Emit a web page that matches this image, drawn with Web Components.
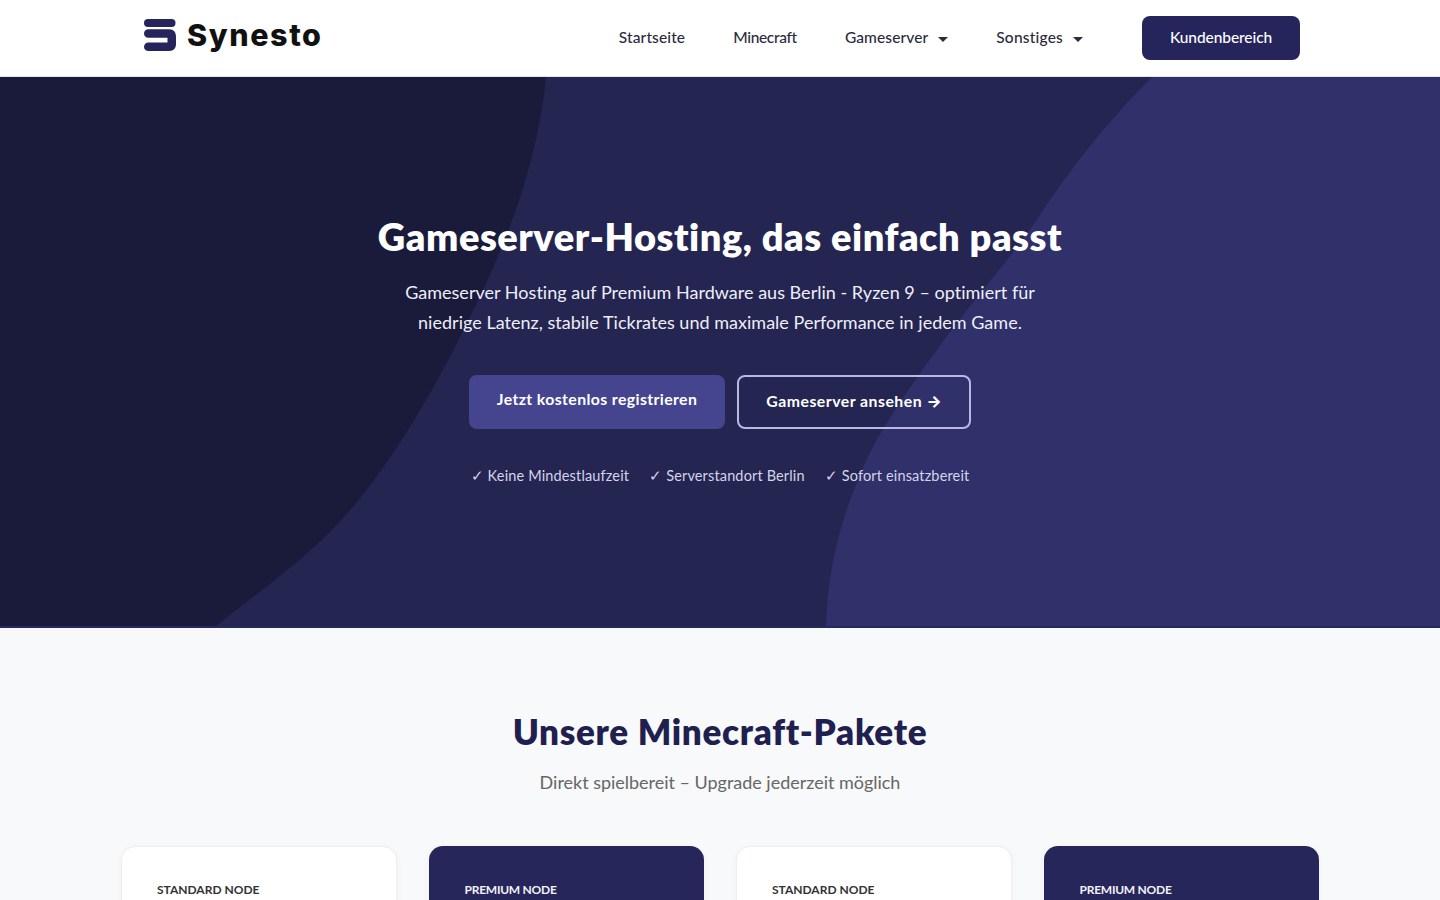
<!DOCTYPE html>
<html lang="de">
<head>
<meta charset="utf-8">
<title>Synesto</title>
<style>
  html, body { margin: 0; background: #f8f9fa; }
  body { height: 900px; overflow: hidden; font-family: "Lato", "Noto Sans", sans-serif; }
</style>
</head>
<body>
<site-header></site-header>
<hero-section></hero-section>
<package-section></package-section>

<script>
class NavLink extends HTMLElement {
  constructor() {
    super();
    this.attachShadow({ mode: 'open' });
  }

  connectedCallback() {
    const caret = this.hasAttribute('caret');
    const spacing = this.getAttribute('spacing') || '.2px';
    this.shadowRoot.innerHTML = `
      <style>
        :host {
          display: flex;
          align-items: center;
          gap: 10px;
          padding-bottom: 2px;
          font-size: 15.5px;
          font-weight: 500;
          letter-spacing: ${spacing};
          color: #2b2b40;
        }
        .caret {
          width: 0;
          height: 0;
          border: 5px solid transparent;
          border-top-color: #2b2b40;
          border-bottom: 0;
          margin-top: 4px;
        }
      </style>
      <slot></slot>
      ${caret ? '<span class="caret"></span>' : ''}
    `;
  }
}

class SiteHeader extends HTMLElement {
  constructor() {
    super();
    this.attachShadow({ mode: 'open' });
  }

  connectedCallback() {
    this.shadowRoot.innerHTML = `
      <style>
        :host {
          display: flex;
          justify-content: space-between;
          height: 76px;
          padding: 0 140px 0 144px;
          background: #fff;
          border-bottom: 1px solid #e4e4ee;
        }
        .logo {
          display: flex;
          align-items: center;
          gap: 11px;
          height: 70px;
          font-family: "Inter", sans-serif;
          font-size: 30.5px;
          font-weight: 800;
          letter-spacing: 1.6px;
          color: #111;
        }
        .logo svg { display: block; }
        .logo span { padding-bottom: 2px; }
        .right {
          display: flex;
          align-items: center;
          gap: 48px;
        }
        a {
          display: block;
          width: 158px;
          height: 44px;
          line-height: 42px;
          margin-left: 11px;
          text-align: center;
          background: #25255c;
          color: #fff;
          border-radius: 8px;
          font-size: 15.5px;
          font-weight: 500;
          letter-spacing: -.08px;
        }
      </style>
      <div class="logo">
        <svg width="32" height="32" viewBox="0 0 32 32" fill="none">
          <rect x="0" y="0" width="31.500" height="8" rx="4" fill="#25255c"/>
          <path d="M4.250 14.600H25.500Q27.750 14.600 27.750 17V25.500Q27.750 27.750 25.500 27.750H4.250" stroke="#25255c" stroke-width="8.500" stroke-linecap="round" stroke-linejoin="round"/>
        </svg>
        <span>Synesto</span>
      </div>
      <div class="right">
        <nav-link spacing=".12px">Startseite</nav-link>
        <nav-link spacing="-.33px">Minecraft</nav-link>
        <nav-link caret spacing=".1px">Gameserver</nav-link>
        <nav-link caret spacing=".2px">Sonstiges</nav-link>
        <a>Kundenbereich</a>
      </div>
    `;
  }
}

class PillButton extends HTMLElement {
  constructor() {
    super();
    this.attachShadow({ mode: 'open' });
  }

  connectedCallback() {
    const outline = this.getAttribute('variant') === 'outline';
    this.shadowRoot.innerHTML = `
      <style>
        :host {
          display: flex;
          align-items: center;
          justify-content: center;
          box-sizing: border-box;
          height: 54px;
          width: ${outline ? '234px' : '256px'};
          border-radius: 8px;
          font-size: 15.800px;
          font-weight: 700;
          letter-spacing: ${outline ? '.5px' : '.4px'};
          color: #fff;
          background: ${outline ? 'transparent' : '#45458f'};
          border: ${outline ? '2px solid #b9b9e2' : '0'};
          padding-bottom: ${outline ? '3px' : '8px'};
        }
      </style>
      <slot></slot>
    `;
  }
}

class HeroSection extends HTMLElement {
  constructor() {
    super();
    this.attachShadow({ mode: 'open' });
  }

  connectedCallback() {
    this.shadowRoot.innerHTML = `
      <style>
        :host {
          display: block;
          position: relative;
          box-sizing: border-box;
          height: 551px;
          background: #252552;
          border-bottom: 2px solid #28285e;
          color: #fff;
          text-align: center;
          overflow: hidden;
        }
        svg {
          position: absolute;
          inset: 0;
          width: 100%;
          height: 100%;
        }
        .content {
          position: relative;
          display: flex;
          flex-direction: column;
          align-items: center;
          padding-top: 134px;
        }
        h1 {
          margin: 0;
          font-size: 38px;
          line-height: 50px;
          font-weight: 800;
          letter-spacing: .52px;
        }
        p {
          margin: 16px 0 0;
          font-size: 18px;
          line-height: 30px;
          letter-spacing: .02px;
          color: #eeeef8;
        }
        .actions {
          display: flex;
          gap: 12px;
          margin-top: 38px;
        }
        .arrow {
          font-family: "Inter", sans-serif;
          font-size: 16px;
          font-weight: 800;
          letter-spacing: 0;
        }
        ul {
          display: flex;
          gap: 20px;
          margin: 38px 0 0;
          padding: 0;
          list-style: none;
          font-size: 14.500px;
          letter-spacing: .15px;
          color: #d4d4ea;
        }
      </style>
      <svg viewBox="0 0 1440 549" preserveAspectRatio="none">
        <path d="M0 0H546C535 110 490 200 459 262C428 324 385 395 344 440C303 485 258 515 216 549H0Z" fill="#1a1a3a"/>
        <path d="M1152 0H1440V549H826C828 490 840 445 862 393C880 350 915 303 950 255C980 215 1010 182 1040 138C1075 85 1110 42 1152 0Z" fill="#30306a"/>
      </svg>
      <div class="content">
        <h1>Gameserver-Hosting, das einfach passt</h1>
        <p>Gameserver Hosting auf Premium Hardware aus Berlin - Ryzen 9 – optimiert für<br>niedrige Latenz, stabile Tickrates und maximale Performance in jedem Game.</p>
        <div class="actions">
          <pill-button>Jetzt kostenlos registrieren</pill-button>
          <pill-button variant="outline">Gameserver ansehen&nbsp;<span class="arrow">→</span></pill-button>
        </div>
        <ul>
          <li>✓ Keine Mindestlaufzeit</li>
          <li>✓ Serverstandort Berlin</li>
          <li>✓ Sofort einsatzbereit</li>
        </ul>
      </div>
    `;
  }
}

class PackageCard extends HTMLElement {
  constructor() {
    super();
    this.attachShadow({ mode: 'open' });
  }

  connectedCallback() {
    const dark = this.hasAttribute('dark');
    this.shadowRoot.innerHTML = `
      <style>
        :host {
          display: block;
          box-sizing: border-box;
          height: 360px;
          padding: ${dark ? '36px' : '35px'};
          border-radius: 14px;
          background: ${dark ? '#26265a' : '#fff'};
          border: ${dark ? '0' : '1px solid #eceef0'};
          box-shadow: 0 2px 8px rgba(0, 0, 0, .04);
          font-size: 12px;
          line-height: 16px;
          font-weight: 700;
          letter-spacing: ${dark ? '-.25px' : '0'};
          text-transform: uppercase;
          color: ${dark ? '#f2f2fa' : '#333'};
        }
      </style>
      <slot></slot>
    `;
  }
}

class PackageSection extends HTMLElement {
  constructor() {
    super();
    this.attachShadow({ mode: 'open' });
  }

  connectedCallback() {
    this.shadowRoot.innerHTML = `
      <style>
        :host {
          display: block;
          padding-top: 81px;
          text-align: center;
        }
        h2 {
          margin: 0;
          font-size: 35px;
          line-height: 44px;
          font-weight: 800;
          letter-spacing: .71px;
          color: #1f1f50;
        }
        p {
          margin: 16px 0 0;
          font-size: 18px;
          line-height: 26px;
          letter-spacing: -.02px;
          color: #666;
        }
        .grid {
          display: grid;
          grid-template-columns: repeat(4, 1fr);
          gap: 32px;
          margin: 51px 121px 0;
          text-align: left;
        }
      </style>
      <h2>Unsere Minecraft-Pakete</h2>
      <p>Direkt spielbereit – Upgrade jederzeit möglich</p>
      <div class="grid">
        <package-card>Standard Node</package-card>
        <package-card dark>Premium Node</package-card>
        <package-card>Standard Node</package-card>
        <package-card dark>Premium Node</package-card>
      </div>
    `;
  }
}

customElements.define('nav-link', NavLink);
customElements.define('site-header', SiteHeader);
customElements.define('pill-button', PillButton);
customElements.define('hero-section', HeroSection);
customElements.define('package-card', PackageCard);
customElements.define('package-section', PackageSection);
</script>
</body>
</html>
